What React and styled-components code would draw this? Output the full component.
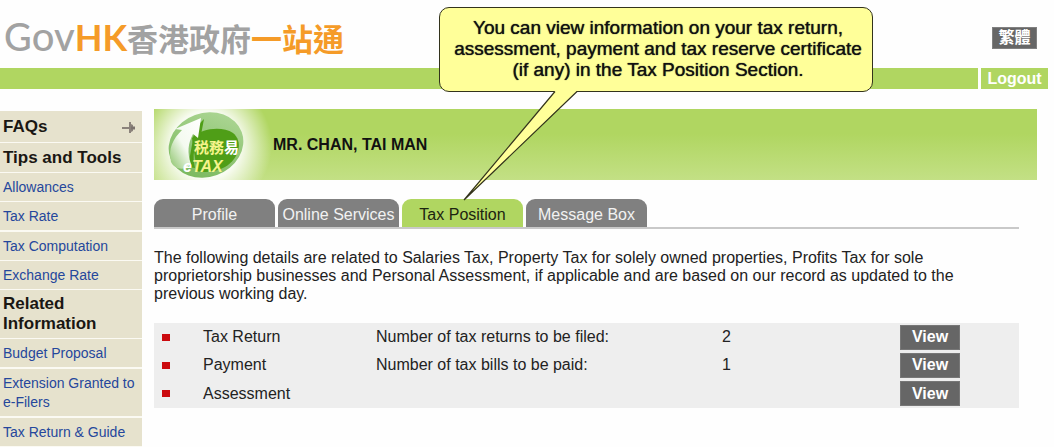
import React from 'react';
import styled, { createGlobalStyle } from 'styled-components';

const GlobalStyle = createGlobalStyle`
  * { box-sizing: border-box; }
  body {
    margin: 0;
    background: #fefefe;
    color: #222;
    font-family: "Liberation Sans", Arial, "Noto Sans CJK TC", sans-serif;
    font-size: 16px;
  }
  button { font-family: inherit; cursor: pointer; }
`;

const Page = styled.div`
  position: relative;
`;

const Header = styled.header`
  display: flex;
  justify-content: space-between;
  align-items: center;
  height: 68px;
  padding: 8px 17px 0 4px;
`;

const Brand = styled.a`
  display: flex;
  align-items: baseline;
  padding-bottom: 3px;
  color: #a2a2a2;
  text-decoration: none;
  white-space: nowrap;
  line-height: 40px;
`;

const Latin = styled.span`
  font-family: ${(p) => (p.$accent ? 'Lato' : '"Lato Medium", Lato')}, sans-serif;
  font-size: ${(p) => p.$size}px;
  font-weight: ${(p) => p.$weight};
  color: ${(p) => (p.$accent ? '#f59b28' : 'inherit')};
`;

const Chinese = styled.span`
  font-family: "Noto Sans CJK TC", sans-serif;
  font-size: 31px;
  font-weight: 700;
  color: ${(p) => (p.$accent ? '#f59b28' : 'inherit')};
`;

const LanguageButton = styled.button`
  width: 45px;
  height: 22px;
  padding: 0;
  border: 1px solid #808080;
  background: #666;
  color: #fff;
  font-size: 16px;
  font-weight: 700;
  line-height: 18px;
`;

const TopBar = styled.div`
  display: flex;
  gap: 3px;
  height: 21px;
  padding-right: 6px;
`;

const BarFill = styled.div`
  flex: 1;
  background: #b0d661;
`;

const Logout = styled.button`
  width: 67px;
  padding: 0;
  border: 0;
  background: #b0d661;
  color: #fff;
  font-size: 16px;
  font-weight: 700;
  line-height: 20px;
`;

const Body = styled.div`
  display: flex;
  align-items: flex-start;
  gap: 12px;
  padding: 20px 17px 0 0;
`;

const Sidebar = styled.nav`
  flex: none;
  width: 142px;
  padding-top: 2px;
`;

const SideHeading = styled.h2`
  display: flex;
  justify-content: space-between;
  align-items: center;
  min-height: ${(p) => (p.$tall ? 32 : 30)}px;
  margin: 0;
  padding: 4px 6px 4px 3px;
  border-bottom: 1px solid #fbfaf3;
  background: #e6e2cd;
  color: #1a1713;
  font-size: 17px;
  line-height: 20px;
`;

const SideLink = styled.a`
  display: block;
  padding: 5px 3px 4px;
  border-bottom: ${(p) => (p.$wide ? 2 : 1)}px solid #fbfaf3;
  background: #e6e2cd;
  color: #25479c;
  font-size: 14px;
  line-height: 19px;
  text-decoration: none;
`;

const Main = styled.main`
  flex: 1;
  min-width: 0;
`;

const Banner = styled.div`
  display: flex;
  align-items: center;
  gap: 17px;
  height: 71px;
  background:
    radial-gradient(circle at 52px 36px, rgba(255, 255, 255, 0.9) 34px, rgba(255, 255, 255, 0) 66px),
    linear-gradient(#b0d661 35%, #c3e085);
`;

const UserName = styled.h1`
  margin: 0;
  color: #111;
  font-size: 16px;
  line-height: 20px;
`;

const Content = styled.div`
  padding: 19px 18px 0 0;
`;

const Tabs = styled.div`
  display: flex;
  gap: 3px;
  height: 30px;
  border-bottom: 2px solid #c9c9c9;
`;

const Tab = styled.button`
  width: 121px;
  height: 28px;
  padding: 4px 0 0;
  border: 0;
  border-radius: 9px 9px 0 0;
  background: ${(p) => (p.$active ? '#b0d661' : '#808080')};
  color: ${(p) => (p.$active ? '#1c2410' : '#f2f2f2')};
  font-size: 16px;
  line-height: 24px;
  white-space: nowrap;
`;

const Intro = styled.p`
  margin: 20px 0;
  padding-right: 32px;
  font-size: 16px;
  line-height: 18px;
`;

const Summary = styled.table`
  width: 100%;
  height: 85px;
  border-collapse: collapse;
  table-layout: fixed;
  background: #eee;
`;

const Cell = styled.td`
  width: ${(p) => p.$width};
  height: 28px;
  padding: 0;
  font-size: 16px;
  line-height: 20px;
`;

const Marker = styled.span`
  display: block;
  width: 8px;
  height: 7px;
  margin-left: 8px;
  background: #cb0a0e;
`;

const ViewButton = styled.button`
  display: block;
  width: 60px;
  height: 25px;
  padding: 0;
  border: 1px solid #777;
  background: #666;
  color: #fff;
  font-size: 16px;
  font-weight: 700;
  line-height: 22px;
`;

const Callout = styled.aside`
  position: absolute;
  top: 7px;
  left: 439px;
  width: 434px;
  height: 85px;
  padding: 9px 4px 10px 8px;
  border: 1px solid #33331c;
  border-radius: 10px;
  background: #ffff99;
  color: #111;
  font-size: 19px;
  line-height: 21px;
  text-align: center;
  text-shadow: 0 0 1px #111;
  white-space: nowrap;
`;

const Tail = styled.svg`
  position: absolute;
  top: 82px;
  left: 20px;
`;

function Pointer() {
  return (
    <Tail width="124" height="112" viewBox="0 0 124 112" aria-hidden="true">
      <path d="M95 1 L4 110 L117 1 Z" fill="#ffff99" />
      <path d="M95 1.5 L4 110 L117 1.5" fill="none" stroke="#33331c" strokeWidth="1.2" />
    </Tail>
  );
}

function PinArrow() {
  return (
    <svg width="14" height="12" viewBox="0 0 14 12" aria-hidden="true">
      <path d="M0 7h7" stroke="#8b827b" strokeWidth="2" />
      <path d="M7 1h2v2l2 1v6l-2 1v1h-2z" fill="#8b827b" />
      <path d="M9 7h4" stroke="#7b726e" strokeWidth="3" />
    </svg>
  );
}

function EtaxLogo() {
  return (
    <svg width="102" height="70" viewBox="0 0 102 70" role="img" aria-label="eTAX">
      <defs>
        <linearGradient id="arrow" x1="0" y1="1" x2="1" y2="0">
          <stop offset="0" stopColor="#8cc46a" />
          <stop offset="0.45" stopColor="#f4faf0" />
          <stop offset="1" stopColor="#fff" />
        </linearGradient>
        <linearGradient id="disc" x1="0" y1="1" x2="1" y2="0">
          <stop offset="0" stopColor="#73b455" />
          <stop offset="1" stopColor="#b3da9b" />
        </linearGradient>
      </defs>
      <ellipse cx="52" cy="35" rx="38" ry="32" transform="rotate(-20 52 35)" fill="url(#disc)" />
      <path d="M38 28 C48 18 68 16 79 23 C89 31 86 48 71 57 C62 62 50 63 43 61 Z" fill="#4f9e17" />
      <path d="M41 18 L50 9 L46 30 C40 36 38 45 41 58 L34 57 Z" fill="#4f9e17" />
      <path d="M17 52 C14 38 19 29 28 20 L21 19 L47 8 L44 28 L39 24 C34 33 33 43 37 54 C31 61 21 60 17 52Z" fill="url(#arrow)" />
      <text x="40" y="43" fontFamily="Noto Sans CJK TC, sans-serif" fontWeight="700" fontSize="15">
        <tspan fill="#f5f48b">税務</tspan><tspan fill="#fff">易</tspan>
      </text>
      <text x="29" y="62" fontFamily="Liberation Sans, sans-serif" fontWeight="700" fontStyle="italic" fontSize="16">
        <tspan fill="#fff">e</tspan><tspan fill="#f5f48b">TAX</tspan>
      </text>
    </svg>
  );
}

const rows = [
  { name: 'Tax Return', note: 'Number of tax returns to be filed:', count: '2' },
  { name: 'Payment', note: 'Number of tax bills to be paid:', count: '1' },
  { name: 'Assessment', note: '', count: '' },
];

const tabs = ['Profile', 'Online Services', 'Tax Position', 'Message Box'];

export default function App() {
  return (
    <Page>
      <GlobalStyle />
      <Header>
        <Brand href="#home">
          <Latin $size={38} $weight={500}>G</Latin>
          <Latin $size={40} $weight={500}>ov</Latin>
          <Latin $size={36} $weight={700} $accent>HK</Latin>
          <Chinese>香港政府</Chinese>
          <Chinese $accent>一站通</Chinese>
        </Brand>
        <LanguageButton lang="zh-Hant">繁體</LanguageButton>
      </Header>
      <TopBar>
        <BarFill />
        <Logout>Logout</Logout>
      </TopBar>
      <Body>
        <Sidebar>
          <SideHeading $tall>FAQs <PinArrow /></SideHeading>
          <SideHeading>Tips and Tools</SideHeading>
          <SideLink href="#allowances">Allowances</SideLink>
          <SideLink href="#rate" $wide>Tax Rate</SideLink>
          <SideLink href="#computation">Tax Computation</SideLink>
          <SideLink href="#exchange">Exchange Rate</SideLink>
          <SideHeading>Related Information</SideHeading>
          <SideLink href="#budget" $wide>Budget Proposal</SideLink>
          <SideLink href="#extension" $wide>Extension Granted to e-Filers</SideLink>
          <SideLink href="#guide">Tax Return &amp; Guide</SideLink>
        </Sidebar>
        <Main>
          <Banner>
            <EtaxLogo />
            <UserName>MR. CHAN, TAI MAN</UserName>
          </Banner>
          <Content>
            <Tabs role="tablist">
              {tabs.map((name) => (
                <Tab key={name} role="tab" aria-selected={name === 'Tax Position'} $active={name === 'Tax Position'}>
                  {name}
                </Tab>
              ))}
            </Tabs>
            <Intro>
              The following details are related to Salaries Tax, Property Tax for solely owned properties, Profits Tax for sole
              proprietorship businesses and Personal Assessment, if applicable and are based on our record as updated to the
              previous working day.
            </Intro>
            <Summary>
              <tbody>
                {rows.map((row) => (
                  <tr key={row.name}>
                    <Cell $width="49px"><Marker /></Cell>
                    <Cell $width="20%">{row.name}</Cell>
                    <Cell $width="40%">{row.note}</Cell>
                    <Cell>{row.count}</Cell>
                    <Cell $width="119px">
                      <ViewButton aria-label={`View ${row.name}`}>View</ViewButton>
                    </Cell>
                  </tr>
                ))}
              </tbody>
            </Summary>
          </Content>
        </Main>
      </Body>
      <Callout>
        You can view information on your tax return,<br />
        assessment, payment and tax reserve certificate<br />
        (if any) in the Tax Position Section.
        <Pointer />
      </Callout>
    </Page>
  );
}
